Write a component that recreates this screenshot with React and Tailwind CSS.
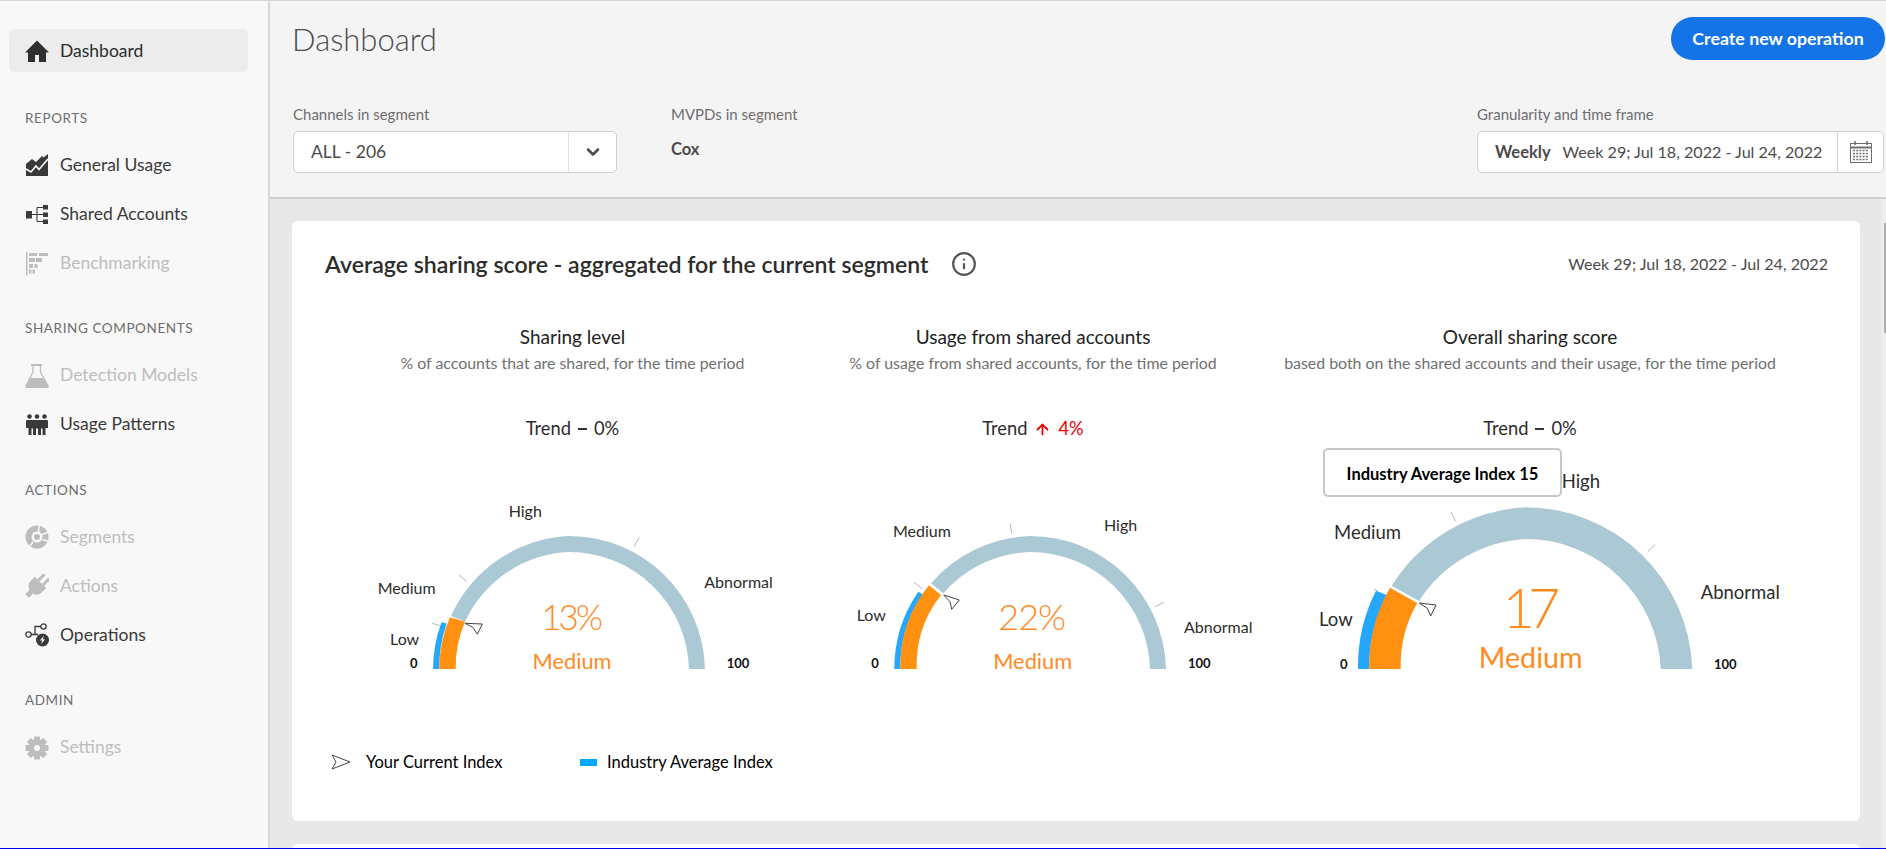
import React from 'react'
import { ChevronDown, Info, ArrowUp } from 'lucide-react'

const FONT = "font-['Lato','Noto_Sans',sans-serif]"

// all gauge numbers are in page pixels, the svg viewBox is the column's own box
const gauges = [
  {
    left: 325, width: 495, title: 'Sharing level',
    sub: '% of accounts that are shared, for the time period',
    trend: '0%', up: false, value: '13%', valueSize: 35, valueSpacing: -3, levelSize: 21.8, labelSize: 16,
    cx: 569, R: 136, r: 120, top: 536, bottom: 669,
    grayOuter: [451, 616], grayInner: [465, 621.7],
    oOut: [439.3, 450, 617.3], oIn: [455.7, 465, 621.7], oR: 130, oIR: 114,
    blue: [433, 441.5, 622.3, 446.7, 623.5],
    ticks: [[459, 575, 466.7, 581.7], [639, 537.7, 634, 546.7], [432.3, 623.3, 440.7, 626]],
    arrow: '465,623.3 482.3,624 477.3,634.3 473,627.5',
    labels: [['Low', 390, 645], ['Medium', 377.7, 594.3], ['High', 508.7, 517.3], ['Abnormal', 704.3, 587.7]],
    zero: [410, 668], hundred: [726.7, 668],
    valuePos: [570.7, 629.7], levelPos: [572, 669],
  },
  {
    left: 820, width: 426, title: 'Usage from shared accounts',
    sub: '% of usage from shared accounts, for the time period',
    trend: '4%', up: true, value: '22%', valueSize: 36, valueSpacing: -1, levelSize: 21.8, labelSize: 16,
    cx: 1030, R: 136, r: 120, top: 536, bottom: 669,
    grayOuter: [931, 583.3], grayInner: [943.3, 593.3],
    oOut: [900.3, 929, 585.3], oIn: [916.7, 941, 595], oR: 130, oIR: 114,
    blue: [894.3, 918.3, 591.7, 922.7, 594.3],
    ticks: [[914, 582.3, 922.3, 588.7], [1010.3, 523.7, 1011.7, 533.3], [1164, 602.3, 1155, 606.7]],
    arrow: '943.7,595 959.3,600 951.7,609.3 950,601.7',
    labels: [['Low', 856.7, 621], ['Medium', 893, 536.7], ['High', 1104, 530.7], ['Abnormal', 1184, 632.7]],
    zero: [871.3, 668], hundred: [1188, 668],
    valuePos: [1031.7, 630], levelPos: [1032.7, 669],
  },
  {
    left: 1246, width: 568, title: 'Overall sharing score',
    sub: 'based both on the shared accounts and their usage, for the time period',
    trend: '0%', up: false, value: '17', valueSize: 56, valueSpacing: -7, levelSize: 28.7, labelSize: 18.5,
    cx: 1525, R: 167.3, r: 135.7, top: 507.3, bottom: 669,
    grayOuter: [1391.7, 585.7], grayInner: [1419, 601],
    oOut: [1369.3, 1390, 587.7], oIn: [1400.7, 1417.3, 603], oR: 156, oIR: 124.5,
    blue: [1358, 1376, 590.7, 1386.7, 595],
    ticks: [[1451, 512, 1455.7, 521.3], [1655, 544.7, 1647.7, 551.7], [1374, 589.3, 1377.3, 590.7]],
    arrow: '1419.3,603 1436,605 1430.7,616 1427.3,608.3',
    labels: [['Low', 1319, 626], ['Medium', 1334, 539], ['High', 1561.7, 487.7], ['Abnormal', 1700.7, 599]],
    zero: [1340, 668.7], hundred: [1714, 668.7],
    valuePos: [1528, 628.3], levelPos: [1530.7, 668],
    tooltip: 'Industry Average Index 15',
  },
]

const Gauge = ({ g }) => {
  const { cx, R, r, top, bottom } = g
  const right = cx + R
  const rightIn = cx + r
  const gray = `M${g.grayOuter[0]} ${g.grayOuter[1]} A${R} ${R} 0 0 1 ${cx} ${top} A${R} ${R} 0 0 1 ${right} ${bottom} L${rightIn} ${bottom} A${r} ${r} 0 0 0 ${cx} ${top + R - r} A${r} ${r} 0 0 0 ${g.grayInner[0]} ${g.grayInner[1]} Z`
  const orange = `M${g.oOut[0]} ${bottom} A${g.oR} ${g.oR} 0 0 1 ${g.oOut[1]} ${g.oOut[2]} L${g.oIn[1]} ${g.oIn[2]} A${g.oIR} ${g.oIR} 0 0 0 ${g.oIn[0]} ${bottom} Z`
  const blue = `M${g.blue[0]} ${bottom} A${R} ${R} 0 0 1 ${g.blue[1]} ${g.blue[2]} L${g.blue[3]} ${g.blue[4]} A${g.oR} ${g.oR} 0 0 0 ${g.oOut[0]} ${bottom} Z`
  return (
    <svg width={g.width} height="230" viewBox={`${g.left} 450 ${g.width} 230`} className="block overflow-visible mt-[9px]">
      {g.ticks.map((t, i) => <line key={i} x1={t[0]} y1={t[1]} x2={t[2]} y2={t[3]} stroke="#b5b5b5" strokeWidth="1" />)}
      <path d={blue} fill="#25a7fb" />
      <path d={gray} fill="#abc9d5" />
      <path d={orange} fill="#ff9010" />
      <polygon points={g.arrow} fill="#fff" stroke="#444" strokeWidth="1" strokeLinejoin="round" />
      {g.labels.map(l => <text key={l[0]} x={l[1]} y={l[2]} fontSize={g.labelSize} fill="#2c2c2c">{l[0]}</text>)}
      <text x={g.zero[0]} y={g.zero[1]} fontSize="13" fontWeight="700" fill="#111">0</text>
      <text x={g.hundred[0]} y={g.hundred[1]} fontSize="13" fontWeight="700" fill="#111">100</text>
      <text x={g.valuePos[0]} y={g.valuePos[1]} fontSize={g.valueSize} fontWeight="300" letterSpacing={g.valueSpacing} textAnchor="middle" fill="#ff8a1e">{g.value}</text>
      <text x={g.levelPos[0]} y={g.levelPos[1]} fontSize={g.levelSize} textAnchor="middle" fill="#ff8a1e">{'Medium'}</text>
    </svg>
  )
}

const GaugeColumn = ({ g }) => (
  <div className="relative flex flex-col items-center">
    <h3 className="h-[24px] text-[19px] leading-[24px] text-[#222] w-full text-center">{g.title}</h3>
    <p className="mt-[3px] h-[22px] text-[15.9px] leading-[22px] text-[#707070] w-full text-center">{g.sub}</p>
    <div className="mt-[43px] h-[24px] flex items-center justify-center gap-[7px] text-[18.3px] text-[#2c2c2c] w-full">
      <span>Trend</span>
      {g.up
        ? <ArrowUp size={17} strokeWidth={2.5} className="text-[#e60000]" />
        : <span className="w-[9px] h-[1.5px] bg-[#333]" />}
      <span className={g.up ? 'text-[#e60000]' : ''}>{g.trend}</span>
    </div>
    <div className="self-start">
      <Gauge g={g} />
    </div>
    {g.tooltip && (
      <div className="absolute left-[77px] top-[123px] w-[239px] h-[49px] pt-[3px] bg-white border-2 border-[#c8c8c8] rounded-[5px] flex items-center justify-center text-[16.5px] font-bold text-black">
        {g.tooltip}
      </div>
    )}
  </div>
)

const IconBox = ({ children, vb = '0 0 24 24' }) => (
  <svg width="24" height="24" viewBox={vb} className="shrink-0" fill="currentColor">{children}</svg>
)

const HomeIcon = () => <IconBox><path d="M12 1.5 L24 13.5 H21 V23 H14 V16 H10 V23 H3 V13.5 H0 Z" /></IconBox>
const UsageIcon = () => (
  <IconBox>
    <path d="M1 11 L7 6 L11 9 L17 3 L18.5 4.5 L23 1 V23 H1 Z" />
    <path d="M1 16 L6 19 L11 13 L14 16.5 L23 6" fill="none" stroke="#f8f8f8" strokeWidth="1.7" />
  </IconBox>
)
const SharedIcon = () => (
  <IconBox>
    <rect x="1" y="9" width="6" height="7.5" />
    <path d="M7 12.5 H18 M12 5.5 V19.5 M12 5.5 H18 M12 19.5 H18" fill="none" stroke="currentColor" strokeWidth="1.1" />
    <rect x="18" y="3" width="5" height="4.5" />
    <rect x="18" y="10.5" width="5" height="4.5" />
    <rect x="18" y="17.5" width="5" height="4.5" />
  </IconBox>
)
const BenchIcon = () => (
  <IconBox>
    <rect x="1" y="1" width="1.5" height="23" />
    <rect x="4" y="2" width="8" height="3" /><rect x="14" y="2" width="9" height="3" />
    <rect x="4" y="7" width="6" height="4" /><rect x="11" y="7" width="6" height="4" />
    <rect x="4" y="13" width="4" height="4" /><rect x="9.5" y="13" width="3" height="4" />
    <rect x="4" y="18.5" width="2.5" height="4" /><rect x="7.5" y="18.5" width="2.5" height="4" />
  </IconBox>
)
const FlaskIcon = () => (
  <IconBox>
    <rect x="6" y="0" width="11" height="2" />
    <path d="M8 2 V8 L1 22 Q1 25 4 25 H20 Q23 25 23 22 L15.5 8 V2" fill="none" stroke="currentColor" strokeWidth="1.3" />
    <path d="M5.5 14 H18 L23 22 Q23 25 20 25 H4 Q1 25 1 22 Z" />
  </IconBox>
)
const PeopleIcon = () => (
  <IconBox>
    <circle cx="4.5" cy="3.5" r="2.3" /><circle cx="12" cy="3.5" r="2.3" /><circle cx="19.5" cy="3.5" r="2.3" />
    <path d="M1 8 Q1 7 2 7 H22 Q23 7 23 8 V15 H20.5 V22 H17.5 V15.5 H16 V22 H13 V15.5 H11 V22 H8 V15.5 H6.5 V22 H3.5 V15 H1 Z" />
  </IconBox>
)
const SegmentsIcon = () => (
  <IconBox>
    <circle cx="12" cy="12" r="8.5" fill="none" stroke="currentColor" strokeWidth="6" />
    <circle cx="12" cy="12" r="3" />
    <path d="M14 0 L13.5 7 M17 9.5 L24 7 M17.5 14.5 L24 16.5 M8 17 L4 22" fill="none" stroke="#f8f8f8" strokeWidth="1.6" />
  </IconBox>
)
const PlugIcon = () => (
  <IconBox>
    <g transform="rotate(45 12 12)">
      <rect x="7.5" y="-2" width="3" height="9" rx="1" />
      <rect x="14" y="-2" width="3" height="9" rx="1" />
      <path d="M4 7 H20 V12 Q20 19 14.5 20 V26 H9.5 V20 Q4 19 4 12 Z" />
    </g>
  </IconBox>
)
const OperationsIcon = () => (
  <IconBox>
    <circle cx="3.5" cy="11.5" r="2.6" fill="none" stroke="currentColor" strokeWidth="1.3" />
    <circle cx="18.5" cy="3.5" r="2.6" fill="none" stroke="currentColor" strokeWidth="1.3" />
    <path d="M6 11.5 H10 V3.5 H16 M10 11.5 H13" fill="none" stroke="currentColor" strokeWidth="1.3" />
    <circle cx="17.5" cy="17" r="6.5" />
    <path d="M19 12.5 L15 17.5 H17.3 L16 21.5 L20 16.3 H17.8 Z" fill="#f8f8f8" />
  </IconBox>
)
const GearIcon = () => (
  <IconBox>
    {[0, 45, 90, 135].map(a => <rect key={a} x="9" y="0.5" width="6" height="23" rx="1" transform={`rotate(${a} 12 12)`} />)}
    <circle cx="12" cy="12" r="8.5" />
    <circle cx="12" cy="12" r="3" fill="#f8f8f8" />
  </IconBox>
)

const CalendarIcon = () => (
  <svg width="24" height="24" viewBox="0 0 24 24" fill="none" stroke="#6e6e6e" strokeWidth="1">
    <rect x="1.5" y="3.5" width="21" height="19" />
    <path d="M1.5 7.5 H22.5" strokeWidth="2" />
    <path d="M6 1 V5 M18 1 V5" strokeWidth="1.5" />
    <path d="M4 10.5 H20 M4 13.5 H20 M4 16.5 H20 M4 19.5 H20" strokeWidth="1.6" strokeDasharray="2 1.2" />
  </svg>
)

const NavItem = ({ icon, label, disabled }) => (
  <div className={`h-[49px] flex items-center pl-[25px] gap-[11px] text-[17.5px] ${disabled ? 'text-[#bdbdbd]' : 'text-[#3a3a3a]'}`}>
    {icon}
    <span>{label}</span>
  </div>
)

const nav = [
  { title: 'Reports', items: [['General Usage', <UsageIcon />], ['Shared Accounts', <SharedIcon />], ['Benchmarking', <BenchIcon />, true]] },
  { title: 'Sharing Components', items: [['Detection Models', <FlaskIcon />, true], ['Usage Patterns', <PeopleIcon />]] },
  { title: 'Actions', items: [['Segments', <SegmentsIcon />, true], ['Actions', <PlugIcon />, true], ['Operations', <OperationsIcon />]] },
  { title: 'Admin', items: [['Settings', <GearIcon />, true]] },
]

const Sidebar = () => (
  <aside className="w-[270px] shrink-0 flex flex-col bg-[#f8f8f8] border-r-2 border-[#d8d8d8] pt-[28px]">
    <div className="mx-[9px] mb-[5px] w-[239px] h-[43px] rounded-[6px] bg-[#ececec] flex items-center pl-[16px] gap-[11px] text-[17.5px] text-[#2c2c2c]">
      <span className="text-[#2f2f2f]"><HomeIcon /></span>
      <span className="mt-[1px]">Dashboard</span>
    </div>
    {nav.map(s => (
      <section key={s.title} className="mt-[30.5px]">
        <div className="h-[20px] leading-[20px] pl-[25px] mb-[13px] text-[13.5px] uppercase tracking-[0.6px] text-[#6e6e6e]">{s.title}</div>
        {s.items.map(i => <NavItem key={i[0]} label={i[0]} icon={i[1]} disabled={i[2]} />)}
      </section>
    ))}
  </aside>
)

const FieldLabel = ({ children }) => (
  <div className="h-[27px] text-[15px] leading-[20px] text-[#6e6e6e]">{children}</div>
)

const Header = () => (
  <header className="h-[198px] shrink-0 bg-[#f4f4f4] border-b-2 border-[#d0d0d0] pl-[23px] pr-[1px] pt-[16px]">
    <div className="flex items-center justify-between h-[43px]">
      <h1 className="text-[31px] font-light text-[#4b4b4b] -ml-[1px] mt-[1px]">Dashboard</h1>
      <button className="w-[214px] h-[43px] rounded-full bg-[#1473e6] text-white text-[17.8px] font-bold">Create new operation</button>
    </div>
    <div className="flex mt-[44px]">
      <div className="w-[378px]">
        <FieldLabel>Channels in segment</FieldLabel>
        <div className="w-[324px] h-[42px] bg-white border border-[#d0d0d0] rounded-[5px] flex items-center text-[17.5px] text-[#4b4b4b]">
          <span className="flex-1 pl-[17px]">ALL - 206</span>
          <span className="w-[48px] h-full border-l border-[#e1e1e1] flex items-center justify-center">
            <ChevronDown size={20} strokeWidth={3} className="text-[#4b4b4b]" />
          </span>
        </div>
      </div>
      <div className="w-[806px]">
        <FieldLabel>MVPDs in segment</FieldLabel>
        <div className="h-[42px] flex items-center text-[16.5px] font-bold text-[#4b4b4b] -mt-[3px]">Cox</div>
      </div>
      <div>
        <FieldLabel>Granularity and time frame</FieldLabel>
        <div className="w-[407px] h-[42px] bg-white border border-[#d0d0d0] rounded-[5px] flex items-center text-[16.1px] text-[#4b4b4b]">
          <span className="flex-1 pl-[17px] whitespace-nowrap"><b className="font-bold text-[16.5px] mr-[8px]">Weekly</b> Week 29; Jul 18, 2022 - Jul 24, 2022</span>
          <span className="w-[46px] h-full border-l border-[#d0d0d0] flex items-center justify-center"><CalendarIcon /></span>
        </div>
      </div>
    </div>
  </header>
)

const Card = () => (
  <div className="bg-white rounded-[6px] pt-[30px] pb-[47px] pl-[33px] pr-[32px]">
    <div className="h-[26px] flex items-center justify-between">
      <div className="flex items-center">
        <h2 className="text-[23.1px] font-semibold text-[#2c2c2c] whitespace-nowrap">Average sharing score - aggregated for the current segment</h2>
        <Info size={26} strokeWidth={2} className="ml-[22px] text-[#555]" />
      </div>
      <span className="text-[16.1px] text-[#4b4b4b]">Week 29; Jul 18, 2022 - Jul 24, 2022</span>
    </div>
    <div className="mt-[48px] grid grid-cols-[495px_426px_568px]">
      {gauges.map(g => <GaugeColumn key={g.title} g={g} />)}
    </div>
    <div className="mt-[70px] h-[24px] flex items-center text-[16.5px] text-black">
      <svg width="20" height="16" viewBox="0 0 20 16" fill="none" stroke="#444" strokeWidth="1" className="ml-[6px]">
        <path d="M1 1 L19 8 L1 15 L5 8 Z" strokeLinejoin="round" />
      </svg>
      <span className="ml-[15px] w-[214px]">Your Current Index</span>
      <span className="w-[17px] h-[7px] bg-[#00a7ff]" />
      <span className="ml-[10px]">Industry Average Index</span>
    </div>
  </div>
)

const App = () => (
  <div className={`w-[1886px] h-[849px] overflow-hidden flex flex-col ${FONT}`}>
    <div className="h-[1px] shrink-0 bg-[#d5d5d5]" />
    <div className="flex-1 flex min-h-0">
      <Sidebar />
      <main className="flex-1 min-w-0 flex flex-col relative">
        <Header />
        <div className="flex-1 min-h-0 bg-[#e8e8e8] pl-[22px] pr-[26px] pt-[22px] overflow-hidden relative">
          <Card />
          <div className="mt-[23px] h-[20px] bg-white rounded-t-[6px]" />
          <div className="absolute right-0 top-0 bottom-0 w-[4px] bg-[#efefef]">
            <div className="absolute right-0 top-[24px] w-[2px] h-[110px] bg-[#b0b0b0]" />
          </div>
        </div>
      </main>
    </div>
    <div className="h-[1px] shrink-0 bg-[#0000ee]" />
  </div>
)

export default App
